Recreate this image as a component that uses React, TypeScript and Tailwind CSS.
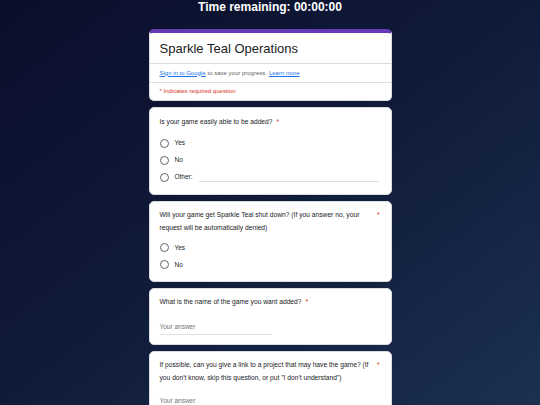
import React from 'react';

const font = { fontFamily: '"Liberation Sans", Arial, sans-serif' };

function Radio({ label, other }: { label: string; other?: boolean }) {
  return (
    <div className="flex items-center h-[17px]">
      <span className="w-[9px] h-[9px] rounded-full border border-[#5f6368] shrink-0" />
      <span className="ml-[6px] text-[6.5px] text-[#202124]">{label}</span>
      {other && <span className="ml-[6px] flex-1 h-px bg-[#dadce0] mt-[9px]" />}
    </div>
  );
}

function Card({ children, className = '' }: { children: React.ReactNode; className?: string }) {
  return <div className={`shrink-0 bg-white rounded-[5px] border border-[#dadce0] ${className}`}>{children}</div>;
}

function Question({ text, inline }: { text: string; inline?: boolean }) {
  if (inline) {
    return (
      <div className="text-[6.7px] leading-[12.5px] text-[#202124]">
        {text} <span className="text-[#d93025] ml-[2px]">*</span>
      </div>
    );
  }
  return (
    <div className="flex text-[6.7px] leading-[12.5px] text-[#202124]">
      <div className="flex-1 pr-[4px]">{text}</div>
      <span className="text-[#d93025] pr-[1px]">*</span>
    </div>
  );
}

function Answer() {
  return (
    <div className="w-[112px] border-b border-[#e0e0e0] pb-[3px] text-[6.5px] text-[#70757a]">Your answer</div>
  );
}

export default function App() {
  return (
    <div
      className="h-[405px] overflow-hidden bg-gradient-to-br from-[#0a0e2b] via-[#101b3a] to-[#1c3050] flex flex-col items-center"
      style={font}
    >
      <div className="shrink-0 h-[29px] text-[12px] leading-[15px] font-bold text-white">
        Time remaining: 00:00:00
      </div>

      <div className="shrink-0 w-[243px] flex flex-col gap-[6px]">
        <Card className="overflow-hidden border-t-[4px] border-t-[#673ab7]">
          <div className="px-[10px] pt-[6px] pb-[4px] text-[13px] leading-[20px] text-[#202124]">
            Sparkle Teal Operations
          </div>
          <div className="border-t border-[#dadce0] px-[10px] h-[19px] flex items-center text-[6px] text-[#5f6368]">
            <span className="text-[#1a73e8] underline">Sign in to Google</span>
            <span className="ml-[2px]">to save your progress.</span>
            <span className="ml-[2px] text-[#1a73e8] underline">Learn more</span>
          </div>
          <div className="border-t border-[#dadce0] px-[10px] h-[18px] flex items-center text-[6px] text-[#d93025]">
            * Indicates required question
          </div>
        </Card>

        <Card className="h-[88px] px-[10px] pt-[8px]">
          <Question text="Is your game easily able to be added?" inline />
          <div className="mt-[6px] pr-[2px]">
            <Radio label="Yes" />
            <Radio label="No" />
            <Radio label="Other:" other />
          </div>
        </Card>

        <Card className="h-[81px] px-[10px] pt-[7px]">
          <Question text="Will your game get Sparkle Teal shut down? (If you answer no, your request will be automatically denied)" />
          <div className="mt-[5px]">
            <Radio label="Yes" />
            <Radio label="No" />
          </div>
        </Card>

        <Card className="h-[57px] px-[10px] pt-[7px]">
          <Question text="What is the name of the game you want added? " inline />
          <div className="mt-[13px]">
            <Answer />
          </div>
        </Card>

        <Card className="h-[70px] px-[10px] pt-[7px]">
          <Question text={'If possible, can you give a link to a project that may have the game? (If you don\'t know, skip this question, or put "I don\'t understand")'} />
          <div className="mt-[12px]">
            <Answer />
          </div>
        </Card>
      </div>
    </div>
  );
}
